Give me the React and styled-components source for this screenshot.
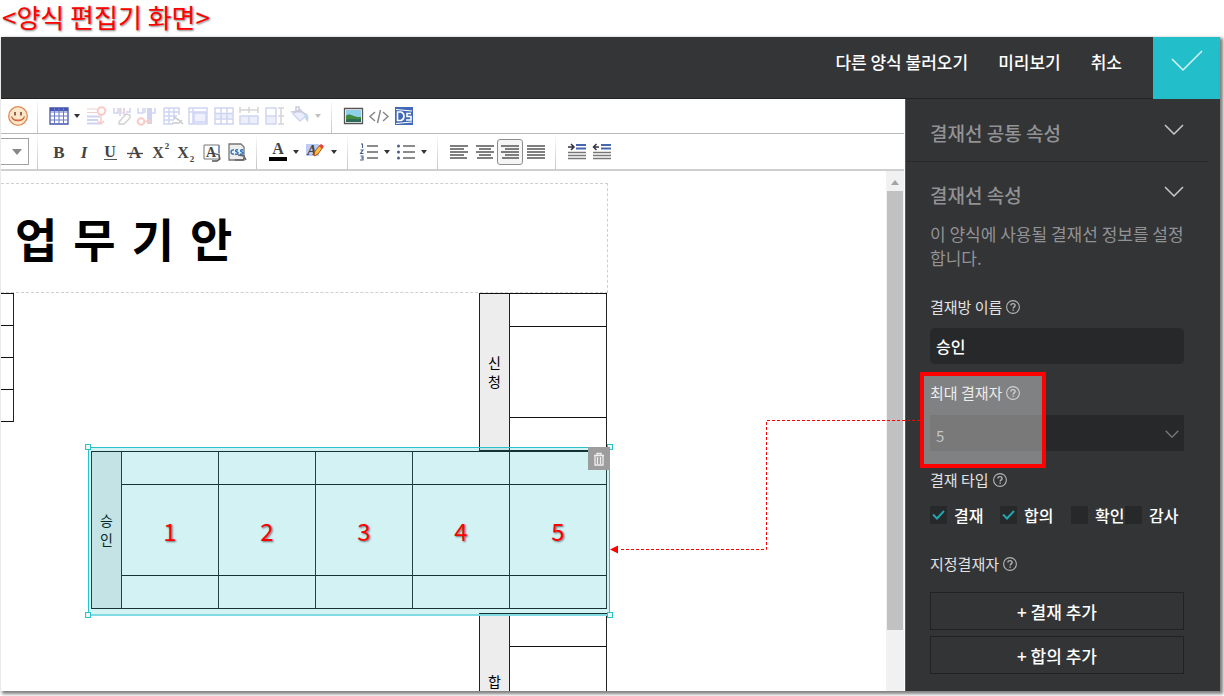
import React, { useState } from "react";
import styled, { createGlobalStyle, css } from "styled-components";

const Global = createGlobalStyle`
  *, *::before, *::after { box-sizing: border-box; }
  body {
    margin: 0;
    background: #fff;
    color: #000;
    font-family: "Noto Sans CJK KR", "Noto Sans", sans-serif;
    overflow: hidden;
  }
  button, input, select { font: inherit; color: inherit; }
  svg { display: block; }
`;

const Caption = styled.h1`
  margin: 0;
  height: 37px;
  padding-left: 2px;
  color: #f00;
  font-size: 26px;
  font-weight: 400;
  line-height: 34px;
  text-shadow: 1px 1px 2px rgba(0, 0, 0, 0.5);
`;

const Frame = styled.div`
  display: flex;
  flex-direction: column;
  height: calc(100vh - 42px);
  margin: 0 4px 5px 1px;
  box-shadow: 2px 2px 3px 1px rgba(0, 0, 0, 0.5);
`;

const Header = styled.header`
  display: flex;
  flex: none;
  justify-content: flex-end;
  height: 62px;
  background: #343537;
`;

const Nav = styled.nav`
  display: flex;
  flex: 1;
  justify-content: flex-end;
  gap: 30px;
  padding: 13px 31px 0 0;
  border-bottom: 1px solid #222325;
`;

const NavLink = styled.a`
  color: #fff;
  font-size: 17px;
  font-weight: 500;
  line-height: 24px;
  text-decoration: none;
  white-space: nowrap;
`;

const SaveButton = styled.button`
  display: grid;
  place-items: center;
  width: 67px;
  padding: 0 0 14px;
  border: 0;
  background: #22bfca;
`;

const Body = styled.div`
  display: flex;
  flex: 1;
  min-height: 0;
`;

const Editor = styled.main`
  display: flex;
  flex: 1;
  flex-direction: column;
  min-width: 0;
  padding-right: 1px;
  background: #fff;
`;

const ToolRow = styled.div`
  display: flex;
  flex: none;
  height: ${(p) => (p.$last ? 37 : 35)}px;
  border-bottom: ${(p) => (p.$last ? "2px solid #cfcfcf" : "1px solid #b9b9b9")};
`;

const Group = styled.div`
  display: flex;
  align-items: center;
  justify-content: space-between;
  width: ${(p) => p.$width}px;
  padding: ${(p) => (p.$first ? "0 7px 0 5px" : "0 7px 0 9px")};
  border-right: ${(p) => (p.$end ? 0 : "1px solid")};
  border-image: linear-gradient(#fff, #c4c4c4) 1;
`;

const Tool = styled.button`
  display: flex;
  align-items: center;
  width: ${(p) => (p.$menu ? 36 : 24)}px;
  height: 24px;
  padding: 0;
  border: 0;
  background: none;
  opacity: ${(p) => (p.$dim ? 0.3 : 1)};
  ${(p) => p.$active && css`
    outline: 1px solid #8d8d8d;
    border-radius: 2px;
    background: #f5f5f5;
  `}
`;

const FontBox = styled.button`
  display: flex;
  align-items: center;
  justify-content: flex-end;
  width: 28px;
  height: 27px;
  padding: 0 5px 0 0;
  border: 1px solid #a2a2a2;
  border-left: 0;
  background: #fff;
`;

const FontCell = styled.div`
  display: flex;
  align-items: center;
  width: 37px;
  border-right: 1px solid;
  border-image: linear-gradient(#fff, #c4c4c4) 1;
`;

const Viewport = styled.div`
  display: flex;
  flex: 1;
  justify-content: space-between;
  min-height: 0;
  overflow: hidden;
`;

const Sheet = styled.article`
  flex: none;
  width: 607px;
  padding-top: 12px;
`;

const SheetTitle = styled.h2`
  height: 110px;
  margin: 0;
  padding-left: 14px;
  border: 1px dashed #cfcfcf;
  border-left: 0;
  font-family: "DejaVu Sans", "Noto Sans CJK KR", sans-serif;
  font-size: 46px;
  font-weight: 700;
  line-height: 114px;
`;

const Line = styled.div`
  display: flex;
  justify-content: ${(p) => (p.$right ? "flex-end" : "space-between")};
  align-items: flex-start;
  padding-right: 1px;
  margin-bottom: ${(p) => (p.$gap ? 4 : 0)}px;
`;

const Grid = styled.table`
  table-layout: fixed;
  border-spacing: 0;
  border-top: 1px solid #111;
  border-left: ${(p) => (p.$cut ? 0 : "1px solid #222")};
  font-size: 14px;
`;

const Cell = styled.td`
  width: ${(p) => p.$w || 97}px;
  height: ${(p) => p.$h}px;
  padding: 0;
  border-right: 1px solid #222;
  border-bottom: 1px solid #111;
  text-align: center;
`;

const HeadCell = styled.th`
  width: 30px;
  padding: ${(p) => (p.$top ? "58px 7px 0" : "0 7px")};
  border-right: 1px solid #222;
  border-bottom: 1px solid #111;
  background: #ededed;
  font-weight: 400;
  line-height: 19px;
  vertical-align: ${(p) => (p.$top ? "top" : "middle")};
`;

const Selected = styled.div`
  position: relative;
  z-index: 1;
`;

const Veil = styled.div`
  position: absolute;
  inset: -4px -3px -7px -3px;
  border: 1px solid #2cc0cb;
  border-bottom: 2px solid #7fdbe1;
  background: rgba(33, 190, 200, 0.2);
`;

const Handle = styled.i`
  position: absolute;
  width: 6px;
  height: 6px;
  border: 1px solid #2cc0cb;
  background: #e9f9fa;
  ${(p) => (p.$bottom ? "bottom: -4px;" : "top: -4px;")}
  ${(p) => (p.$right ? "right: -4px;" : "left: -4px;")}
`;

const TrashButton = styled.button`
  position: absolute;
  top: -4px;
  right: -3px;
  display: grid;
  place-items: center;
  width: 22px;
  height: 23px;
  padding: 0;
  border: 0;
  background: #9d9d9d;
`;

const Mark = styled.span`
  position: relative;
  z-index: 2;
  color: #f00;
  font-size: 24px;
  text-shadow: 1px 1px 2px rgba(0, 0, 0, 0.55);
`;

const ScrollTrack = styled.div`
  display: flex;
  flex-direction: column;
  align-items: center;
  width: 18px;
  padding-top: 9px;
  background: #f1f1f1;
`;

const ScrollThumb = styled.div`
  width: 16px;
  height: 86%;
  margin-top: 6px;
  background: #c1c1c1;
`;

const Sidebar = styled.aside`
  flex: none;
  width: 315px;
  border-left: 1px solid #55565a;
  background: #333436;
`;

const SectionHead = styled.div`
  display: flex;
  align-items: flex-start;
  justify-content: space-between;
  margin-right: ${(p) => (p.$ruled ? 11 : 0)}px;
  padding: ${(p) => (p.$ruled ? "20px 25px 14px 24px" : "19px 36px 13px 24px")};
  border-bottom: ${(p) => (p.$ruled ? "1px solid #29292b" : 0)};
`;

const SectionTitle = styled.h3`
  margin: 0;
  color: #929294;
  font-size: 19px;
  font-weight: 500;
  line-height: 28px;
`;

const IconButton = styled.button`
  display: grid;
  place-items: center;
  height: 20px;
  padding: 0;
  border: 0;
  background: none;
`;

const Panel = styled.div`
  padding: 0 36px 0 24px;
`;

const Note = styled.p`
  margin: 0 0 25px;
  color: #929294;
  font-size: 17px;
  line-height: 24px;
  word-break: break-all;
`;

const Field = styled.div`
  position: relative;
  margin-bottom: ${(p) => p.$after || 17}px;
`;

const Label = styled.label`
  display: flex;
  align-items: center;
  gap: 3px;
  margin-bottom: ${(p) => p.$gap || 9}px;
  color: #e2e2e2;
  font-size: 15px;
  line-height: 24px;
`;

const TextInput = styled.input`
  display: block;
  width: 100%;
  height: 36px;
  padding: 0 6px;
  border: 0;
  border-radius: 5px;
  background: #272829;
  color: #fff;
  font-size: 16px;
  font-weight: 500;
`;

const SelectWrap = styled.div`
  display: grid;
  align-items: center;
  background: #272829;
  & > * { grid-area: 1 / 1; }
  & > svg { justify-self: end; margin: 2px 5px 0 0; pointer-events: none; }
`;

const Select = styled.select`
  width: 100%;
  height: 36px;
  padding: 4px 6px 0;
  border: 0;
  background: none;
  color: #a2a2a4;
  font-size: 15px;
  appearance: none;
`;

const Checks = styled.div`
  display: grid;
  grid-template-columns: 70px 71px 54px 54px;
`;

const CheckLabel = styled.label`
  display: flex;
  align-items: center;
  gap: 7px;
  color: #fff;
  font-size: 16px;
  font-weight: 500;
  line-height: 24px;
  white-space: nowrap;
`;

const CheckBox = styled.span`
  display: grid;
  place-items: center;
  width: 17px;
  height: 18px;
  background: #272829;
  & > * { grid-area: 1 / 1; }
  & > svg { visibility: hidden; pointer-events: none; }
  & > input:checked + svg { visibility: visible; }
`;

const Tick = styled.input`
  width: 100%;
  height: 100%;
  margin: 0;
  appearance: none;
`;

const AddButton = styled.button`
  display: block;
  width: 100%;
  height: 38px;
  margin-bottom: 6px;
  padding: 0;
  border: 1px solid #212224;
  background: none;
  color: #fff;
  font-size: 17px;
  font-weight: 500;
`;

const Highlight = styled.div`
  position: absolute;
  top: -9px;
  left: -10px;
  width: 126px;
  height: 96px;
  border: 4px solid #f00;
  background: rgba(255, 255, 255, 0.38);
  pointer-events: none;
`;

const Connector = styled.svg`
  position: absolute;
  top: 34px;
  right: calc(100% + 10px);
  pointer-events: none;
`;

const Svg = ({ w = 24, h = 24, children }) => (
  <svg width={w} height={h} viewBox={`0 0 ${w} ${h}`} fill="none" aria-hidden="true">{children}</svg>
);

const Caret = ({ color = "#333" }) => (
  <Svg w={12} h={8}><path d="M3 2h6L6 6z" fill={color} /></Svg>
);

const Chevron = ({ w = 20, color = "#c9c9c9", width = 1.5 }) => (
  <svg width={w} height={w / 2 + 1} viewBox="0 0 20 11" fill="none" aria-hidden="true">
    <path d="M1 1l9 9 9-9" stroke={color} strokeWidth={width} />
  </svg>
);

const Help = () => (
  <Svg w={16} h={16}>
    <circle cx="8" cy="8" r="6.4" stroke="#b4b4b4" strokeWidth="1.1" />
    <path d="M5.9 6.6c0-1.3.9-2 2.1-2s2.1.7 2.1 1.8c0 1.4-1.9 1.500-1.900 3" stroke="#b4b4b4" strokeWidth="1.4" />
    <path d="M7.4 10.4h1.5v1.4H7.4z" fill="#b4b4b4" />
  </Svg>
);

const serif = { fontFamily: "Liberation Serif, serif", fontWeight: 700, fill: "#444", textAnchor: "middle" };
const blue = "#6675d8";

const icons = {
  smile: (
    <Svg>
      <circle cx="12" cy="12" r="9.3" fill="#fde7cb" stroke="#dc8a55" strokeWidth="1.3" />
      <path d="M9 8v3.500M15 8v3.500" stroke="#7a3a20" strokeWidth="1.500" />
      <path d="M5.500 12.500c2 5.500 11 5.500 13 0" stroke="#c25e36" strokeWidth="1.200" />
      <path d="M9 15.500h6l-3 2z" fill="#e06a4a" />
    </Svg>
  ),
  table: (
    <Svg>
      <path d="M3 4h18v16H3z" fill="#fff" />
      <path d="M3 4h18v3H3z" fill="#4a5bb5" />
      <path d="M3 4h18v16H3z" stroke="#4353ac" strokeWidth="1.300" />
      <path d="M3 8h18M3 12h18M3 16h18M7.500 4v16M12 4v16M16.500 4v16" stroke="#6a79c8" />
    </Svg>
  ),
  addRow: (
    <Svg>
      <path d="M3 5h10M3 8.500h10" stroke="#c66" strokeWidth="1.200" />
      <path d="M3 12.500h13M3 16h11M3 19.500h13" stroke={blue} strokeWidth="2" />
      <circle cx="17.500" cy="7" r="3.800" stroke="#e54" strokeWidth="2" />
      <path d="M17 11v9M14 17l3 3 3-3" stroke="#e54" strokeWidth="1.500" />
    </Svg>
  ),
  eraseCol: (
    <Svg>
      <path d="M4 4v5h4V4M10 4v8M14 4v7M16 8h4V4" stroke={blue} strokeWidth="1.600" />
      <path d="M11 4v5h3V4" stroke="#e54" />
      <path d="M9 18l7-8 4 1v3l-6 6H9z" fill="#fff" stroke="#666" strokeWidth="1.400" />
    </Svg>
  ),
  addCol: (
    <Svg>
      <path d="M3 4v5h5V4M10 4v5M20 4v5h-3" stroke={blue} strokeWidth="1.500" />
      <path d="M12 4h5v16h-5z" fill={blue} />
      <circle cx="6" cy="17.500" r="3.300" stroke="#e54" strokeWidth="2" />
      <path d="M10 17.500h6M13 15v5" stroke="#e54" strokeWidth="1.600" />
    </Svg>
  ),
  eraseTable: (
    <Svg>
      <path d="M3 4h15v7M3 4v16h9M3 8h15M3 12h13M3 16h10M8 4v16M13 4v12" stroke={blue} strokeWidth="1.500" />
      <path d="M13 13l5 3 4 4M11 19h7l3-3" stroke="#555" strokeWidth="1.500" />
    </Svg>
  ),
  tableProps: (
    <Svg>
      <path d="M3 4h18v16H3zM3 8h18M7 4v16" stroke={blue} strokeWidth="1.500" />
      <path d="M8 9h12v9H8z" fill="#c9d0fa" stroke={blue} strokeWidth="1.500" />
    </Svg>
  ),
  cells: (
    <Svg>
      <path d="M3 4h18v16H3zM3 9.500h18M3 15h18M9 4v16M15 4v16" stroke={blue} strokeWidth="1.500" />
      <path d="M4 10h16v4H4z" fill={blue} fillOpacity=".4" />
    </Svg>
  ),
  colWidth: (
    <Svg>
      <path d="M3 6h18M3 3v6M21 3v6M12 3v6" stroke="#777" strokeWidth="1.500" />
      <path d="M3 12h18v8H3zM12 12v8" stroke={blue} strokeWidth="1.500" />
      <path d="M3 12h18v8H3z" fill={blue} fillOpacity=".4" />
    </Svg>
  ),
  rowHeight: (
    <Svg>
      <path d="M3 4h10v16H3zM3 12h10" stroke={blue} strokeWidth="1.500" />
      <path d="M4 13h8v6H4z" fill={blue} fillOpacity=".4" />
      <path d="M18 4v16M15 4h6M15 12h6M15 20h6" stroke="#777" strokeWidth="1.500" />
    </Svg>
  ),
  bucket: (
    <Svg>
      <path d="M5 10l7-5 6 7-6 5z" fill="#b9c4fa" stroke={blue} strokeWidth="1.300" />
      <path d="M3 8l9-1 7 4M8 9V3h3v6" stroke="#558" strokeWidth="1.500" />
      <path d="M17 9c4 1 4 5 3 9-2-1-4-4-3-9z" fill="#38b" />
    </Svg>
  ),
  image: (
    <Svg>
      <path d="M3.500 4.500h18v15h-18z" fill="#fff" stroke="#555" strokeWidth="1.300" />
      <path d="M5 6h15v7H5z" fill="#8fd0e8" />
      <path d="M5 12c4-4 7 2 15 1v5H5z" fill="#3f8a3c" />
      <path d="M5 16c5-2 9 0 15-1v3H5z" fill="#2b6b5b" />
    </Svg>
  ),
  code: (
    <Svg>
      <path d="M8 8l-5 4.500L8 17M16 8l5 4.500L16 17M13.500 6l-3 13" stroke="#888" strokeWidth="1.500" />
    </Svg>
  ),
  ds: (
    <Svg>
      <path d="M3 3h18v18H3z" fill="#4169b5" />
      <path d="M5.500 8v8.500h3.500q3-1 3-4.200T9 8zM19 9.500h-4v3h4v3.500h-5" stroke="#fff" strokeWidth="1.600" />
      <path d="M4 5.500l16 1.500M4 19.500l16-1.500" stroke="#fff" strokeWidth="1.200" />
    </Svg>
  ),
  bold: <Svg><text x="12" y="18" fontSize="17" {...serif}>B</text></Svg>,
  italic: <Svg><text x="12" y="18" fontSize="17" fontStyle="italic" {...serif}>I</text></Svg>,
  underline: <Svg><text x="12" y="17" fontSize="16" {...serif}>U</text><path d="M6 19.500h13" stroke="#555" /></Svg>,
  strike: <Svg><text x="12" y="18" fontSize="17" {...serif}>A</text><path d="M4 13.500h16" stroke="#444" strokeWidth="1.300" /></Svg>,
  sup: <Svg><text x="9" y="18" fontSize="16" {...serif}>X</text><text x="18" y="9" fontSize="9" {...serif}>2</text></Svg>,
  sub: <Svg><text x="9" y="18" fontSize="16" {...serif}>X</text><text x="18" y="22" fontSize="9" {...serif}>2</text></Svg>,
  clearText: (
    <Svg>
      <path d="M4 5h15v14H4z" fill="#fff" stroke="#777" />
      <path d="M19 5v8" stroke="#7787c4" strokeWidth="1.500" />
      <text x="11" y="17" fontSize="14" {...serif}>A</text>
      <path d="M13 13l6 2 1 4-3 2h-5" stroke="#555" strokeWidth="1.300" />
    </Svg>
  ),
  clearCss: (
    <Svg>
      <path d="M4 4h12l3 3v13H4z" fill="#eee" stroke="#777" strokeWidth="1.300" />
      <path d="M9 10c-4-1-4 5 0 4M13 10c-3-1-3 1.500-1 2s1 3-2 2M18 10c-3-1-3 1.500-1 2s1 3-2 2" stroke="#2874c0" strokeWidth="1.400" />
      <path d="M13 15l6 1 2 4M10 20h8l2-3" stroke="#666" strokeWidth="1.400" />
    </Svg>
  ),
  color: <Svg><text x="12" y="14" fontSize="16" {...serif}>A</text><path d="M3 17h18v4H3z" fill="#000" /></Svg>,
  highlighter: (
    <Svg>
      <path d="M2 4h13v12H2z" fill="#bccaf8" />
      <text x="8" y="15" fontSize="14" fontStyle="italic" {...serif}>A</text>
      <path d="M11 11l5-6 3 2-5 7-4 2z" fill="#ffc03c" stroke="#b3541c" />
      <path d="M15 6l2-2 3 2-2 3z" fill="#e8443a" />
    </Svg>
  ),
  numbered: (
    <Svg>
      <path d="M4 4h1.500v4M3.500 10h2.500l-2.500 3.500h3M3.500 16h2.500v4h-3M4 18h2" stroke="#4d5c8c" strokeWidth="1.100" />
      <path d="M10 6h11M10 12h11M10 18h11" stroke="#666" strokeWidth="1.400" />
    </Svg>
  ),
  bulleted: (
    <Svg>
      <circle cx="4.500" cy="6" r="1.500" fill="#4d5c8c" />
      <circle cx="4.500" cy="12" r="1.500" fill="#4d5c8c" />
      <circle cx="4.500" cy="18" r="1.500" fill="#4d5c8c" />
      <path d="M9 6h12M9 12h12M9 18h12" stroke="#666" strokeWidth="1.400" />
    </Svg>
  ),
  left: <Svg><path d="M3 6h18M3 9h14M3 12h18M3 15h14M3 18h17" stroke="#555" strokeWidth="1.500" /></Svg>,
  center: <Svg><path d="M3 6h18M6 9h12M3 12h18M6 15h12M4 18h16" stroke="#555" strokeWidth="1.500" /></Svg>,
  right: <Svg><path d="M3 6h18M7 9h14M3 12h18M7 15h14M4 18h17" stroke="#555" strokeWidth="1.500" /></Svg>,
  justify: <Svg><path d="M3 6h18M3 9h18M3 12h18M3 15h18M3 18h18" stroke="#555" strokeWidth="1.500" /></Svg>,
  indent: (
    <Svg>
      <path d="M11 5h10M11 8.500h10" stroke="#4667b0" strokeWidth="2.200" />
      <path d="M3 7h5M6 4l3 3-3 3" stroke="#334" strokeWidth="1.500" />
      <path d="M3 12.500h18M3 15.500h18M3 18.500h18" stroke="#777" strokeWidth="1.500" />
    </Svg>
  ),
  outdent: (
    <Svg>
      <path d="M11 5h10M11 8.500h10" stroke="#4667b0" strokeWidth="2.200" />
      <path d="M9 7H4M6.500 4l-3 3 3 3" stroke="#334" strokeWidth="1.500" />
      <path d="M3 12.500h18M3 15.500h18M3 18.500h18" stroke="#777" strokeWidth="1.500" />
    </Svg>
  ),
};

const T = ({ icon, menu, dim, active }) => (
  <Tool type="button" aria-label={icon} $menu={menu} $dim={dim} $active={active}>
    {icons[icon]}
    {menu && <Caret />}
  </Tool>
);

const Approval = ({ name, count = 1, marks, top }) => {
  const cols = Array.from({ length: count }, (_, i) => i);
  return (
    <Grid>
      <tbody>
        <tr>
          <HeadCell rowSpan={3} scope="rowgroup" $top={top}>{name}</HeadCell>
          {cols.map((c) => <Cell key={c} $h={33} />)}
        </tr>
        <tr>{cols.map((c) => <Cell key={c} $h={91}>{marks && <Mark>{c + 1}</Mark>}</Cell>)}</tr>
        <tr>{cols.map((c) => <Cell key={c} $h={33} />)}</tr>
      </tbody>
    </Grid>
  );
};

const disabledTools = ["addRow", "eraseCol", "addCol", "eraseTable", "tableProps", "cells", "colWidth", "rowHeight"];

export default function App() {
  const [name, setName] = useState("승인");
  return (
    <>
      <Global />
      <Caption>&lt;양식 편집기 화면&gt;</Caption>
      <Frame>
        <Header>
          <Nav>
            <NavLink href="#load">다른 양식 불러오기</NavLink>
            <NavLink href="#preview">미리보기</NavLink>
            <NavLink href="#cancel">취소</NavLink>
          </Nav>
          <SaveButton type="button" aria-label="저장">
            <Svg w={32} h={22}><path d="M1 9l11 11L31 1" stroke="#d8f4f6" strokeWidth="1.500" /></Svg>
          </SaveButton>
        </Header>
        <Body>
          <Editor>
            <ToolRow>
              <Group $width={37} $first><T icon="smile" /></Group>
              <Group $width={294}>
                <T icon="table" menu />
                {disabledTools.map((t) => <T key={t} icon={t} dim />)}
                <T icon="bucket" menu dim />
              </Group>
              <Group $width={91} $end>
                <T icon="image" />
                <T icon="code" />
                <T icon="ds" />
              </Group>
            </ToolRow>
            <ToolRow $last>
              <FontCell>
                <FontBox type="button" aria-label="글꼴"><Svg w={12} h={8}><path d="M1 1h10L6 7z" fill="#888" /></Svg></FontBox>
              </FontCell>
              <Group $width={219}>
                {["bold", "italic", "underline", "strike", "sup", "sub", "clearText", "clearCss"].map((t) => <T key={t} icon={t} />)}
              </Group>
              <Group $width={91}><T icon="color" menu /><T icon="highlighter" menu /></Group>
              <Group $width={90}><T icon="numbered" menu /><T icon="bulleted" menu /></Group>
              <Group $width={118}>
                <T icon="left" /><T icon="center" /><T icon="right" active /><T icon="justify" />
              </Group>
              <Group $width={65} $end><T icon="indent" /><T icon="outdent" /></Group>
            </ToolRow>
            <Viewport>
              <Sheet>
                <SheetTitle>업 무 기 안</SheetTitle>
                <Line>
                  <Grid $cut>
                    <tbody>{[0, 1, 2, 3].map((r) => <tr key={r}><Cell $w={13} $h={32} /></tr>)}</tbody>
                  </Grid>
                  <Approval name="신청" />
                </Line>
                <Line $right $gap>
                  <Selected>
                    <Approval name="승인" count={5} marks />
                    <Veil>
                      <Handle /><Handle $right /><Handle $bottom /><Handle $bottom $right />
                    </Veil>
                    <TrashButton type="button" aria-label="삭제">
                      <Svg w={12} h={14}>
                        <path d="M1 3.500h10M4 3V1.500h4V3M2 4v9h8V4M4.500 5v7M7.500 5v7" stroke="#eee" strokeWidth="1.300" />
                      </Svg>
                    </TrashButton>
                  </Selected>
                </Line>
                <Line $right><Approval name="합" top /></Line>
              </Sheet>
              <ScrollTrack>
                <Svg w={10} h={5}><path d="M1 5h8L5 0z" fill="#a3a3a3" /></Svg>
                <ScrollThumb />
              </ScrollTrack>
            </Viewport>
          </Editor>
          <Sidebar>
            <SectionHead $ruled>
              <SectionTitle>결재선 공통 속성</SectionTitle>
              <IconButton type="button" aria-label="펼치기"><Chevron /></IconButton>
            </SectionHead>
            <SectionHead>
              <SectionTitle>결재선 속성</SectionTitle>
              <IconButton type="button" aria-label="펼치기"><Chevron /></IconButton>
            </SectionHead>
            <Panel>
              <Note>이 양식에 사용될 결재선 정보를 설정합니다.</Note>
              <Field>
                <Label htmlFor="room">결재방 이름<Help /></Label>
                <TextInput id="room" value={name} onChange={(e) => setName(e.target.value)} />
              </Field>
              <Field>
                <Label htmlFor="max" $gap={10}>최대 결재자<Help /></Label>
                <SelectWrap>
                  <Select id="max" defaultValue="5"><option>5</option></Select>
                  <Chevron w={14} color="#77787a" width={2} />
                </SelectWrap>
                <Highlight />
                <Connector width="310" height="140" viewBox="0 0 310 140" fill="none" aria-hidden="true">
                  <path d="M310 5.500H156.500V134.500H10" stroke="#f00" strokeDasharray="3 2" />
                  <path d="M0 134.500l8-4v8z" fill="#f00" />
                </Connector>
              </Field>
              <Field $after={25}>
                <Label as="div" $gap={11}>결재 타입<Help /></Label>
                <Checks>
                  {[["결재", true], ["합의", true], ["확인", false], ["감사", false]].map(([text, on]) => (
                    <CheckLabel key={text}>
                      <CheckBox>
                        <Tick type="checkbox" defaultChecked={on} />
                        <Svg w={13} h={10}><path d="M1 4.500l4 4L12 1" stroke="#22a3ae" strokeWidth="2" /></Svg>
                      </CheckBox>
                      {text}
                    </CheckLabel>
                  ))}
                </Checks>
              </Field>
              <Label as="div" $gap={16}>지정결재자<Help /></Label>
              <AddButton type="button">+ 결재 추가</AddButton>
              <AddButton type="button">+ 합의 추가</AddButton>
            </Panel>
          </Sidebar>
        </Body>
      </Frame>
    </>
  );
}
